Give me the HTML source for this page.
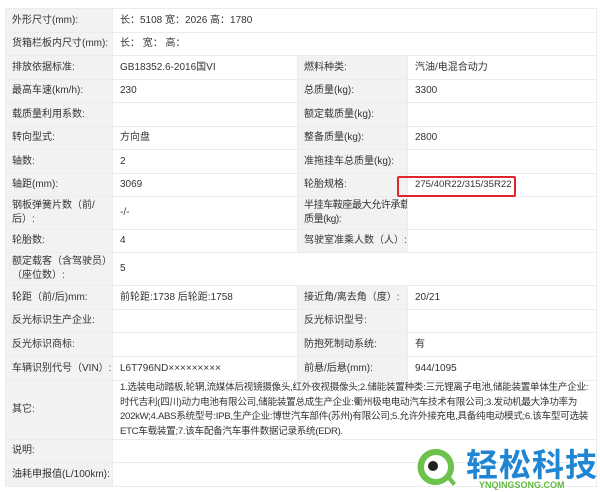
<!DOCTYPE html>
<html><head><meta charset="utf-8"><style>
body{margin:0;width:600px;height:492px;background:#fff;overflow:hidden;font-family:"Liberation Sans","Noto Sans CJK SC",sans-serif;font-size:10px;color:#333;position:relative}
table{position:absolute;left:5px;top:8px;border-collapse:collapse;table-layout:fixed;width:591px}
td{border:1px solid #ececec;padding:0 0 0 7px;vertical-align:middle;line-height:14px;white-space:nowrap;overflow:hidden}
td.l{background:#f2f2f2;padding-left:6px}
.red{position:absolute;left:397px;top:176px;width:119px;height:21px;border:2px solid #e0262c;box-sizing:border-box;border-radius:2px}
</style></head><body>
<table>
<col style="width:107px"><col style="width:185px"><col style="width:110px"><col style="width:189px">
<tr style="height:24px"><td class="l">外形尺寸(mm):</td><td colspan="3">长：5108 宽：2026 高：1780</td></tr>
<tr style="height:23px"><td class="l">货箱栏板内尺寸(mm):</td><td colspan="3">长： 宽： 高：</td></tr>
<tr style="height:24px"><td class="l">排放依据标准:</td><td>GB18352.6-2016国VI</td><td class="l">燃料种类:</td><td>汽油/电混合动力</td></tr>
<tr style="height:23px"><td class="l">最高车速(km/h):</td><td>230</td><td class="l">总质量(kg):</td><td>3300</td></tr>
<tr style="height:24px"><td class="l">载质量利用系数:</td><td></td><td class="l">额定载质量(kg):</td><td></td></tr>
<tr style="height:23px"><td class="l">转向型式:</td><td>方向盘</td><td class="l">整备质量(kg):</td><td>2800</td></tr>
<tr style="height:24px"><td class="l">轴数:</td><td>2</td><td class="l">准拖挂车总质量(kg):</td><td></td></tr>
<tr style="height:23px"><td class="l">轴距(mm):</td><td>3069</td><td class="l">轮胎规格:</td><td style="font-size:9.6px">275/40R22/315/35R22</td></tr>
<tr style="height:33px"><td class="l">钢板弹簧片数（前/<br>后）:</td><td>-/-</td><td class="l" style="letter-spacing:-0.4px">半挂车鞍座最大允许承载<br>质量(kg):</td><td></td></tr>
<tr style="height:23px"><td class="l">轮胎数:</td><td>4</td><td class="l">驾驶室准乘人数（人）:</td><td></td></tr>
<tr style="height:33px"><td class="l">额定载客（含驾驶员）<br>（座位数）:</td><td colspan="3">5</td></tr>
<tr style="height:24px"><td class="l">轮距（前/后)mm:</td><td>前轮距:1738 后轮距:1758</td><td class="l">接近角/离去角（度）:</td><td>20/21</td></tr>
<tr style="height:23px"><td class="l">反光标识生产企业:</td><td></td><td class="l">反光标识型号:</td><td></td></tr>
<tr style="height:24px"><td class="l">反光标识商标:</td><td></td><td class="l">防抱死制动系统:</td><td>有</td></tr>
<tr style="height:24px"><td class="l">车辆识别代号（VIN）:</td><td>L6T796ND×××××××××</td><td class="l">前悬/后悬(mm):</td><td>944/1095</td></tr>
<tr style="height:59px"><td class="l">其它:</td><td colspan="3" style="font-size:9.6px;letter-spacing:-0.3px;line-height:14.5px;white-space:normal;padding-right:2px">1.选装电动踏板,轮辋,流媒体后视镜摄像头,红外夜视摄像头;2.储能装置种类:三元锂离子电池,储能装置单体生产企业:时代吉利(四川)动力电池有限公司,储能装置总成生产企业:衢州极电电动汽车技术有限公司;3.发动机最大净功率为202kW;4.ABS系统型号:IPB,生产企业:博世汽车部件(苏州)有限公司;5.允许外接充电,具备纯电动模式;6.该车型可选装ETC车载装置;7.该车配备汽车事件数据记录系统(EDR).</td></tr>
<tr style="height:23px"><td class="l">说明:</td><td colspan="3"></td></tr>
<tr style="height:24px"><td class="l">油耗申报值(L/100km):</td><td colspan="3"></td></tr>
</table>
<div class="red"></div>
<svg style="position:absolute;left:414px;top:445px" width="44" height="44" viewBox="0 0 44 44">
<path d="M22 4a18 18 0 1 0 12 31l5 6 3-3-5-6A18 18 0 0 0 22 4z" fill="#6cc24a"/>
<circle cx="22" cy="22" r="12" fill="#fff"/>
<circle cx="19" cy="21" r="5" fill="#222"/>
</svg>
<div style="position:absolute;left:466px;top:446px;font-size:32px;font-weight:bold;color:#1f86d3;letter-spacing:1px;line-height:34px;font-family:'Noto Sans CJK SC',sans-serif">轻松科技</div>
<div style="position:absolute;left:479px;top:480px;font-size:9px;font-weight:bold;color:#5dbb3a;line-height:10px">YNQINGSONG.COM</div>
</body></html>
